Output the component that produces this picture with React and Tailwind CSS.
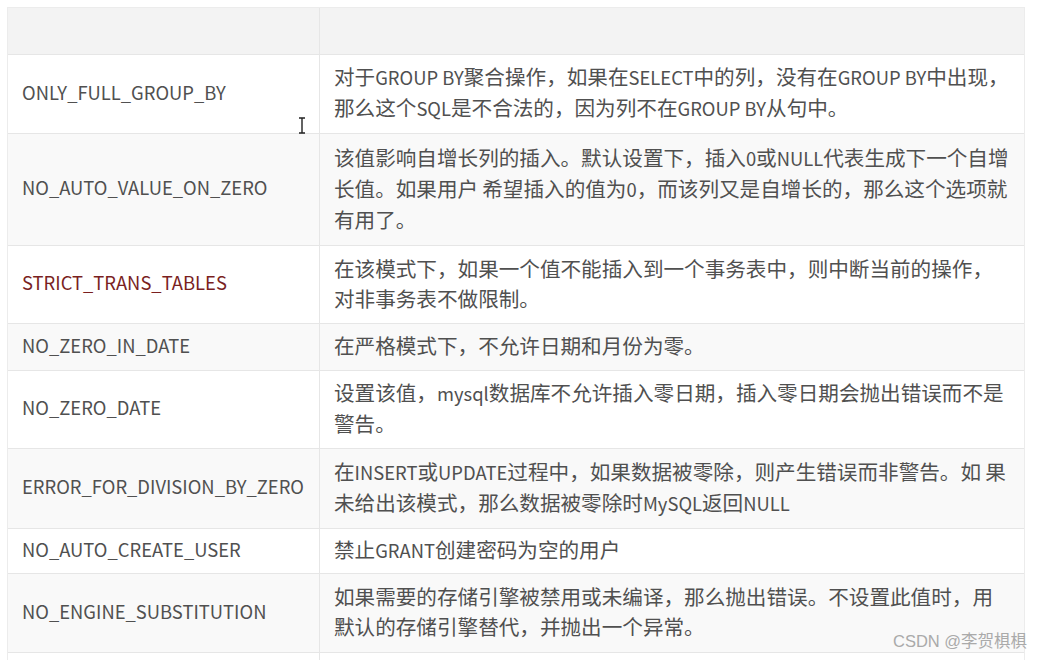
import React from "react";

const rows = [
  {
    name: "ONLY_FULL_GROUP_BY",
    h: "h-[79px]",
    lines: [
      "对于GROUP BY聚合操作，如果在SELECT中的列，没有在GROUP BY中出现，",
      "那么这个SQL是不合法的，因为列不在GROUP BY从句中。",
    ],
  },
  {
    name: "NO_AUTO_VALUE_ON_ZERO",
    h: "h-[112px]",
    lines: [
      "该值影响自增长列的插入。默认设置下，插入0或NULL代表生成下一个自增",
      "长值。如果用户 希望插入的值为0，而该列又是自增长的，那么这个选项就",
      "有用了。",
    ],
  },
  {
    name: "STRICT_TRANS_TABLES",
    h: "h-[78px]",
    red: true,
    lines: [
      "在该模式下，如果一个值不能插入到一个事务表中，则中断当前的操作，",
      "对非事务表不做限制。",
    ],
  },
  {
    name: "NO_ZERO_IN_DATE",
    h: "h-[47px]",
    lines: ["在严格模式下，不允许日期和月份为零。"],
  },
  {
    name: "NO_ZERO_DATE",
    h: "h-[78px]",
    lines: [
      "设置该值，mysql数据库不允许插入零日期，插入零日期会抛出错误而不是",
      "警告。",
    ],
  },
  {
    name: "ERROR_FOR_DIVISION_BY_ZERO",
    h: "h-[80px]",
    lines: [
      "在INSERT或UPDATE过程中，如果数据被零除，则产生错误而非警告。如 果",
      "未给出该模式，那么数据被零除时MySQL返回NULL",
    ],
  },
  {
    name: "NO_AUTO_CREATE_USER",
    h: "h-[45px]",
    lines: ["禁止GRANT创建密码为空的用户"],
  },
  {
    name: "NO_ENGINE_SUBSTITUTION",
    h: "h-[79px]",
    lines: [
      "如果需要的存储引擎被禁用或未编译，那么抛出错误。不设置此值时，用",
      "默认的存储引擎替代，并抛出一个异常。",
    ],
  },
  { name: "", h: "h-[40px]", lines: [] },
];

// latin runs in the source are set a bit narrower than the CJK glyphs
const Mixed = ({ text }) =>
  text.split(/([A-Za-z0-9_ ]+)/).map((part, i) =>
    /^[A-Za-z0-9_ ]+$/.test(part) ? (
      <span key={i} className="text-[18.4px]">
        {part}
      </span>
    ) : (
      <span key={i}>{part}</span>
    )
  );

const Row = ({ row, index }) => (
  <div
    className={`flex border-t border-[#e6e6e6] ${row.h} ${
      index % 2 === 1 ? "bg-[#f9f9f9]" : "bg-white"
    }`}
  >
    <div
      className={`w-[311px] shrink-0 flex items-center pl-[14px] pb-[3px] text-[18.4px] ${
        row.red ? "text-[#7a1f1f]" : "text-[#505050]"
      }`}
    >
      {row.name}
    </div>
    <div className="flex-1 flex flex-col justify-center border-l border-[#e6e6e6] pl-[14px] pb-[4px] text-[20.6px] leading-[30px] text-[#505050] whitespace-nowrap">
      {row.lines.map((line, i) => (
        <div key={i}>
          <Mixed text={line} />
        </div>
      ))}
    </div>
  </div>
);

export default function App() {
  return (
    <div
      className="relative w-[1045px] h-[660px] overflow-hidden bg-white pt-[7px] pl-[7px]"
      style={{ fontFamily: '"Noto Sans CJK SC", "Noto Sans", sans-serif' }}
    >
      <div className="w-[1018px] border-l border-r border-t border-[#ececec]">
        <div className="flex h-[46px] bg-[#f3f3f3]">
          <div className="w-[311px] shrink-0" />
          <div className="flex-1 border-l border-[#e6e6e6]" />
        </div>
        {rows.map((row, i) => (
          <Row key={i} row={row} index={i} />
        ))}
      </div>

      <svg
        className="absolute left-[297px] top-[117px]"
        width="10"
        height="17"
        viewBox="0 0 10 17"
      >
        <path
          d="M2 1h6M5 1v15M2 16h6"
          stroke="#222"
          strokeWidth="1.4"
          fill="none"
        />
      </svg>

      <div
        className="absolute left-[893px] top-[629px] text-[16.5px] text-[#aaaaaa]"
        style={{ fontFamily: '"Liberation Sans", "Noto Sans CJK SC", sans-serif' }}
      >
        CSDN @李贺椇椇
      </div>
    </div>
  );
}
